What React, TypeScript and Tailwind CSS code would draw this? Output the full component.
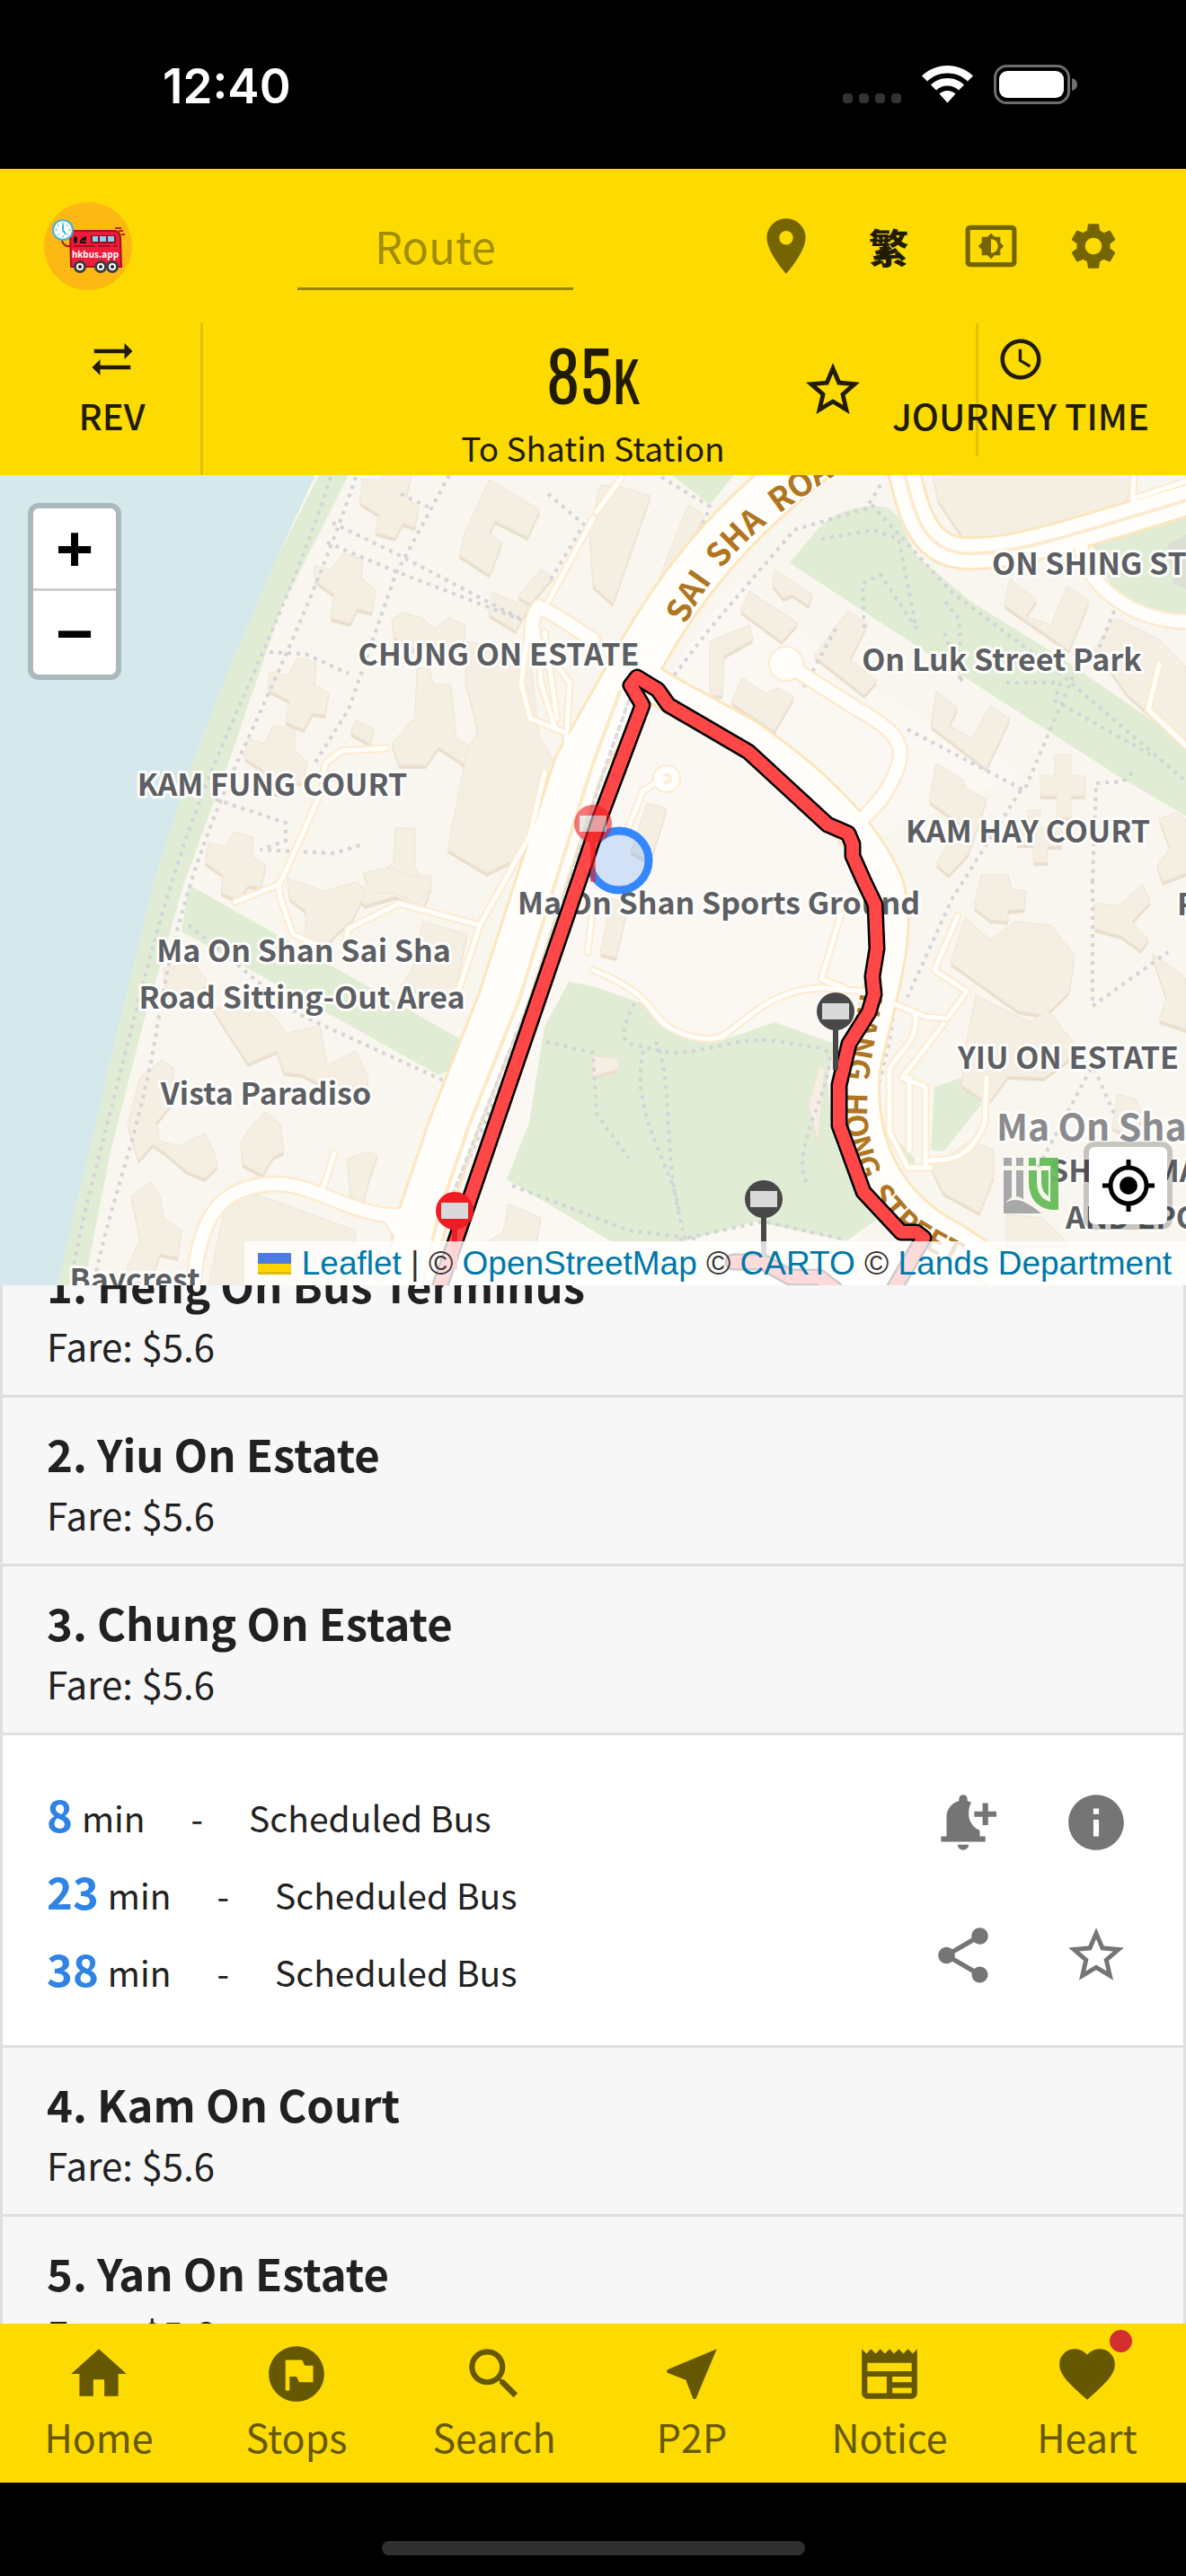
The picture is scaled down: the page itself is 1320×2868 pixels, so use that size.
import React from "react";
import {
  MdHome,
  MdFlagCircle,
  MdSearch,
  MdNearMe,
  MdNewspaper,
  MdFavorite,
  MdInfo,
  MdShare,
  MdStarBorder,
  MdSyncAlt,
  MdSchedule,
  MdLocationOn,
  MdSettings,
  MdSettingsBrightness,
} from "react-icons/md";

const buildings: string[] = [
  // towers along the waterfront
  "M402 533l18 2 8-6h30l-6 24 14 12-4 22-14-4-8 16-22-6 4-20-22-14 4-20z",
  "M350 630l18 4 14-18 22 6-2 22 16 12-4 26-16-4-8 16-22-6 4-26-22-16z",
  "M300 748l20 4 12-20 20 6-2 24 16 10-4 24-14-2-10 18-20-8 4-24-24-12z",
  "M276 822l18 6 10-20 24 4 0 24 14 12-6 24-16-4-8 16-20-4 2-22-22-14z",
  "M232 938l20 4 8-16 22 6-2 22 16 10-6 24-14-2-10 16-20-8 2-20-20-14z",
  "M436 690l12-8 22 6 14 12 16-12 18 8-2 22-14 8-26-6-20 4-18-16z",
  "M545 534l56 34-14 30-36-18-6 14 14 10-14 36-34-22 6-24z",
  "M602 634l14 8-26 30-14-8z",
  "M548 660l40 16-14 26-30-18z",
  "M464 744h14l4 18h20l6 60 24 14-6 24-16-14-22-14-14 20-30 0-8-24 26-30z",
  "M396 802l20 10-4 16-22-12z",
  "M520 714l70 16 10 90 18 30-14 24-10 60-16 20-36 18-44-26 22-110 12-22-14-56z",
  "M440 922h22v44l16 30-8 16-30-14-34 10-12-14 24-18 20-16z",
  "M320 978l40 14 36-10 12 10-16 32-16 14-12 12-24-2 0-34-18-14z",
  "M404 972l30-6 28 10 18-2 0 16-16 16-26-12-24 0z",
  "M470 1026l50 14-14 64-16 6-44-12 14-22z",
  "M182 1078l34-6 14 20-10 20-36-10z",
  "M236 1122l60 0 24 28 36-8 8 44 32-16 14 30-4 30-28-12-42-22-20-2-8-24-32 14z",
  "M156 1200l24-20 14 10-4 40-16 20 4 20 20 6 30-14 10 20 4 16-14 14-20-8-26-22-12-8-16 18-12-40z",
  "M276 1258l20-20 16 14 4 30-12 6-12 20-22-12-2-24z",
  "M386 1290l24-8 10 4-10 30-6 26-14-12z",
  "M146 1332l22-16 10 16 4 24 20 14-4 30-20-4-10 30-30 4 4-20 14-30z",
  "M250 1346l36-16 110 40-10 61h-154z",
  "M566 1340l36 16-6 34-50 26-10-30 24-14z",
  // north and east blocks
  "M668 540l24 2 32 10-42 120-22-20-4-60z",
  "M766 562l18 12-60 126-10 34-14-6 24-60z",
  "M834 658l54 36-18 20-46-34z",
  "M862 634l42 28-4 12-18-12-10 4-12-14z",
  "M790 714l44-18 4 16-32 18-2 44-14 0z",
  "M944 680l22 14-20 40 30 24-14 16-56-44z",
  "M826 754l26 18 14-6 18 10-22 38-48-32z",
  "M1038 529h224l-16 54-108 34-60-10-34-50z",
  "M1124 644l30 24-12 18 28 10 18-44 24 18-22 54-72-50z",
  "M1042 770l24 18-10 20 26 14 20-36 22 14-26 56-62-48z",
  "M1042 850l30 18 4 10 22 12-20 60-22 24-14-12 26-46-34-24z",
  "M1174 840h18v24h16v22h-16v24h-16v-24h-18v-22h16z",
  "M1144 902h14v20h24v20h-16v18h-16v-20h-18v-18h12z",
  "M1242 688l48 24 30 30v90l-66-60-36-50z",
  "M1290 912l20-8 10 8v60l-26 10-6-18 14-20z",
  "M720 894l22 6-18 60-22-12z",
  "M680 1000l20 6-14 60-18-4z",
  "M1092 974l30 0 4 16 16 2-2 20-18 2 0 12-20-2-18-14z",
  "M1074 1022l28 24 28-20 40 4 26 34-6 40-26 26-30-4-76-54z",
  "M1086 1108l60 30 20-14 36 46-40 30-40-2-22 30-30-20 4-40z",
  "M1218 1006l28 2 26-24 8 20-20 22 18 20-8 12-22-16-30-8z",
  "M1282 1062l24 16 14 12v56l-30-10 8-24z",
  "M1244 1218l20 6 10 20-16 20-20-8z",
  "M1080 1270l26 10 0 30-16 40-40-22-14-28z",
  "M1120 1352l40 4 30 30h-70z",
  "M660 1176l28 2 0 12-28 8z",
  "M912 1186l6 4-8 80-10-40z",
];

const footpaths: string[] = [
  "M368 531C330 650 276 760 236 857S170 1050 140 1170 92 1350 78 1431",
  "M396 531C356 650 300 770 268 840S196 1010 176 1137 124 1330 104 1431",
  "M370 582L448 620 600 700",
  "M364 604L440 636 580 690",
  "M500 529L440 640 388 790 350 850",
  "M446 550L478 565",
  "M610 550L650 584 610 650",
  "M300 726L340 728 388 750",
  "M240 890L318 916 318 936 290 946 372 950 404 940",
  "M210 1030L330 1128 500 1206 486 1300 460 1340",
  "M640 1000L590 1080 570 1180 500 1340",
  "M570 1320L700 1370 780 1380",
  "M608 1160L660 1172 664 1240 700 1290",
  "M706 1117C680 1170 700 1160 736 1170S820 1150 870 1160 930 1160 920 1200 880 1290 900 1320",
  "M716 1170C700 1240 750 1300 756 1350",
  "M730 1160C750 1200 736 1280 760 1370",
  "M756 1380L850 1360 940 1380",
  "M736 531L790 564 770 620 712 700",
  "M980 540L964 566 884 590 790 700 744 760",
  "M914 600L972 590 1000 600 1020 700 980 640 960 650 962 700",
  "M1052 670L1068 690 1070 760 1050 700",
  "M970 562L1060 660 1180 750 1320 870",
  "M930 700L892 770",
  "M1010 812L1140 880 1200 740",
  "M1136 880L1060 1000 1010 1110",
  "M1120 760L1180 760 1174 780 1280 840",
  "M1216 980L1216 1120 1300 1060",
  "M994 990L1010 1010 990 1160 970 1240 1000 1350 1080 1400",
  "M1214 1190L1150 1310",
  "M1218 1190L1240 1240",
  "M1240 680L1216 740",
  "M1260 860L1250 870 1220 872 1216 980",
];

const minorRoads: string[] = [
  "M430 833L380 836 362 850 358 880 336 930 318 970 310 985 312 1000 326 1040 360 1056",
  "M310 985L262 1004",
  "M384 1050L388 1034 444 1006 534 1030 590 930 606 860",
  "M534 1030L510 1104",
  "M660 577L610 670",
  "M692 531L664 570",
  "M604 720L634 760 630 830 606 1000",
  "M588 700L580 760 590 800 628 815",
  "M598 700L602 760 618 812",
  "M606 704L620 800",
  "M372 1284L358 1328",
  "M740 866L716 880 700 920",
  "M660 1010L654 1060",
  "M660 1080C700 1096 716 1110 730 1130S780 1160 800 1155 850 1100 917 1100L975 1105",
  "M936 1018L914 1090 940 1100",
  "M1066 1020L1040 1080 1076 1104 1054 1134 1030 1132 996 1118",
  "M1018 1128C1024 1160 1000 1170 990 1190V1260L1010 1300H1036",
  "M1050 1140L1004 1200 1030 1210 1030 1300",
  "M1012 1200V1280",
  "M1098 1200L1096 1250C1080 1290 1060 1292 1030 1292",
  "M1290 740L1278 790 1320 830",
  "M1262 530L1260 568",
  "M1262 555L1320 536",
];

const collectorRoads: string[] = [
  "M875 739L955 790C1000 815 1010 830 996 862S970 900 955 917",
  "M1203 606C1206 650 1260 692 1320 692",
  "M215 1431C222 1360 240 1318 311 1318 350 1320 390 1350 433 1353 450 1356 462 1346 470 1336",
  "M600 676C590 690 592 700 592 710M600 676L616 684 660 712",
  "M433 1353L456 1390",
];

const saiShaRoad =
  "M905 510C830 570 770 630 715 727L668 810 644 853 606 970 560 1113 505 1253 471 1353 450 1440";
const hangHongStreet =
  "M700 745L744 772 828 818C890 860 960 920 986 985 1004 1040 974 1120 960 1190 952 1290 1000 1350 1060 1380L1150 1440";
const onShingStreet =
  "M1000 500C1016 560 1020 620 1085 616 1130 616 1180 600 1330 554";

const busRoute =
  "M490 1431L648 970 668 910 715 785 702 763 709 754 732 768 744 785 833 837 921 918 944 928 949 940V953L961 980 974 1007 976 1056 971 1087 973 1107 967 1127 945 1162 934 1208V1253L961 1327 1003 1372H1020L1028 1378 992 1440";
const busRouteStart = "M816 1405H849L879 1422H912L929 1435";

const mapLabels: { x: number; y: number; text: string; anchor: "start" | "middle" }[] = [
  { x: 555, y: 741, text: "CHUNG ON ESTATE", anchor: "middle" },
  { x: 303, y: 886, text: "KAM FUNG COURT", anchor: "middle" },
  { x: 1104, y: 640, text: "ON SHING STREET", anchor: "start" },
  { x: 1115, y: 747, text: "On Luk Street Park", anchor: "middle" },
  { x: 1144, y: 938, text: "KAM HAY COURT", anchor: "middle" },
  { x: 800, y: 1018, text: "Ma On Shan Sports Ground", anchor: "middle" },
  { x: 338, y: 1071, text: "Ma On Shan Sai Sha", anchor: "middle" },
  { x: 336, y: 1123, text: "Road Sitting-Out Area", anchor: "middle" },
  { x: 296, y: 1230, text: "Vista Paradiso", anchor: "middle" },
  { x: 150, y: 1437, text: "Baycrest", anchor: "middle" },
  { x: 1189, y: 1190, text: "YIU ON ESTATE", anchor: "middle" },
  { x: 1310, y: 1019, text: "P", anchor: "start" },
  { x: 1168, y: 1316, text: "SHING MAN", anchor: "start" },
  { x: 1186, y: 1368, text: "AND EPOCH", anchor: "start" },
];

function StopPin({ x, y, color, faded }: { x: number; y: number; color: string; faded?: boolean }) {
  return (
    <g transform={`translate(${x} ${y})`} opacity={faded ? 0.6 : 1}>
      <rect x="-3" y="18" width="6" height="47" fill={color} />
      <circle r="21" fill={color} />
      <rect x="-15" y="-9" width="30" height="18" fill="#d9d9d9" />
    </g>
  );
}

function RouteMap() {
  return (
    <svg
      className="absolute inset-0 h-full w-full"
      viewBox="0 529 1320 902"
      preserveAspectRatio="xMidYMid slice"
      role="img"
      aria-label="Route map"
    >
      <rect y="500" width="1320" height="960" fill="#f9f6ef" />
      <path d="M700 760L660 900 570 1200 500 1431H950L990 1200 980 960 860 820z" fill="#fbf8f3" />
      <path d="M820 640L960 760 1140 860 980 930 740 760z" fill="#fbf8f3" />
      <path
        d="M0 500H364L309 620 252 753 212 857 172 980 126 1170 90 1323 62 1440H0z"
        fill="#d5e8eb"
      />
      <g fill="#e0ecd4">
        <path d="M355 529H388L313 677 261 830 206 980 160 1137 122 1287 92 1440H62L90 1323 126 1170 172 980 212 857 252 753 309 620z" />
        <path d="M971 563C940 566 920 575 905 595L879 627 1072 753 1249 867 1330 914V835L1182 733 1081 670 1018 617 1000 575 988 565z" />
        <path d="M1216 607L1330 572V690C1290 690 1250 670 1236 650z" />
        <path d="M736 520L790 562 824 520z" />
        <path d="M210 985L307 1040 518 1160 505 1190 488 1197 202 1037z" />
        <path d="M633 1093L660 1098 715 1117 757 1150 799 1160 862 1138 929 1162 921 1203 929 1270 950 1323 976 1357 942 1382 887 1370 841 1360 761 1382H680L564 1313 589 1250 606 1143z" />
        <path d="M1040 1210L1070 1200 1090 1180 1092 1230 1050 1282 1036 1280z" />
        <path d="M996 1266L1018 1290V1302L1004 1294z" />
      </g>
      <path d="M1300 606L1330 590V660L1306 650z" fill="#dcdfd6" />

      <g fill="#eadfce" transform="translate(0 4)">
        {buildings.map((d) => (
          <path key={d} d={d} />
        ))}
      </g>
      <g fill="#f5eee3" stroke="#efe5d6" strokeWidth="1">
        {buildings.map((d) => (
          <path key={d} d={d} />
        ))}
      </g>

      <g fill="none" stroke="#d3d3d8" strokeWidth="4" strokeDasharray="4 6">
        {footpaths.map((d) => (
          <path key={d} d={d} />
        ))}
      </g>

      <g fill="none" strokeLinejoin="round" strokeLinecap="round">
        <g stroke="#fdebd0">
          {minorRoads.map((d) => (
            <path key={d} d={d} strokeWidth="9" />
          ))}
          {collectorRoads.map((d) => (
            <path key={d} d={d} strokeWidth="19" />
          ))}
          <circle cx="875" cy="739" r="12" strokeWidth="16" />
          <circle cx="742" cy="867" r="10" strokeWidth="12" />
        </g>
        <path d={saiShaRoad} stroke="#fce6bd" strokeWidth="58" />
        <path d={hangHongStreet} stroke="#fce6bd" strokeWidth="42" />
        <path d={onShingStreet} stroke="#fce6bd" strokeWidth="38" />
        <g stroke="#fffefb">
          {minorRoads.map((d) => (
            <path key={d} d={d} strokeWidth="5" />
          ))}
          {collectorRoads.map((d) => (
            <path key={d} d={d} strokeWidth="14" />
          ))}
          <circle cx="875" cy="739" r="12" strokeWidth="12" />
          <circle cx="742" cy="867" r="10" strokeWidth="8" />
        </g>
        <path d={saiShaRoad} stroke="#fffefb" strokeWidth="52" />
        <path d={hangHongStreet} stroke="#fffefb" strokeWidth="36" />
        <path d={onShingStreet} stroke="#fffefb" strokeWidth="32" />
        <path d={onShingStreet} stroke="#fdebd0" strokeWidth="4" />
        <path d="M690 770L660 850 622 970 578 1113 522 1253 488 1353 470 1431" stroke="#fce9c6" strokeWidth="4" />
        <path d="M700 780L668 870 634 980 590 1113 534 1253 500 1340" stroke="#dcdcdf" strokeWidth="4" strokeDasharray="4 6" />
      </g>

      <g
        fill="#5d5f62"
        stroke="#fdfdfc"
        strokeWidth="6"
        strokeLinejoin="round"
        paintOrder="stroke"
        className="font-['Noto_Sans_CJK_TC','Noto_Sans',sans-serif] text-[34px] font-bold"
      >
        {mapLabels.map((l) => (
          <text key={l.text} x={l.x} y={l.y} textAnchor={l.anchor}>
            {l.text}
          </text>
        ))}
        <text x="1109" y="1270" fill="#8b8b8d" className="text-[41px]">
          Ma On Shan
        </text>
      </g>

      <defs>
        <path id="sai-sha-label" d="M763 696C790 640 830 600 870 570 900 548 940 522 990 490" />
        <path id="hang-hong-label" d="M958 1105C950 1150 938 1200 940 1245 944 1300 970 1345 1010 1378 1040 1398 1080 1415 1120 1440" />
      </defs>
      <g
        fill="#b0761f"
        stroke="#fffefb"
        strokeWidth="4"
        paintOrder="stroke"
        className="font-['Noto_Sans_CJK_TC','Noto_Sans',sans-serif] font-bold"
      >
        <text className="text-[36px]">
          <textPath href="#sai-sha-label">{"SAI\u00a0\u00a0SHA\u00a0\u00a0ROAD"}</textPath>
        </text>
        <text className="text-[34px]">
          <textPath href="#hang-hong-label">{"HANG\u00a0\u00a0HONG\u00a0\u00a0STREET"}</textPath>
        </text>
      </g>

      <circle cx="689" cy="958" r="33" fill="#3388ff" fillOpacity="0.2" stroke="#3388ff" strokeWidth="9" />
      <g fill="none" strokeLinejoin="round" strokeLinecap="round">
        <path d={busRoute} stroke="#000" strokeWidth="19" />
        <path d={busRouteStart} stroke="#000" strokeWidth="19" />
        <path d={busRoute} stroke="#ff4747" strokeWidth="14" />
        <path d={busRouteStart} stroke="#ff4747" strokeWidth="14" />
      </g>
      <StopPin x={660} y={917} color="#ee1c24" faded />
      <StopPin x={930} y={1126} color="#484848" />
      <StopPin x={850} y={1335} color="#484848" />
      <StopPin x={506} y={1348} color="#ee1c24" />

      <g opacity="0.95">
        <g fill="#a3a4a7">
          <path d="M1117 1289h9v9h-9zM1131 1289h8v9h-8zM1117 1303h9v30q-6 4-9 9zM1131 1303h8v32q-4-3-8-3z" />
          <path d="M1117 1341q8-7 20-4 10 4 22 14h-42z" />
        </g>
        <g fill="#66bd5b">
          <path d="M1145 1289h8v9h-8zM1157 1289h21v58h-8q-25-4-25-32v-12h9v12q0 19 15 23v-40h-12z" />
          <path d="M1159 1303h8v29q-8-5-8-16z" />
        </g>
      </g>
    </svg>
  );
}

function AppLogo() {
  return (
    <svg viewBox="49 225 98 98" className="h-[98px] w-[98px]" role="img" aria-label="hkbus.app">
      <circle cx="98" cy="274" r="49" fill="#fdb813" />
      <path d="M69 268q2 7 9 6" fill="none" stroke="#a81919" strokeWidth="2" />
      <path d="M128 254h7M132 257h5M135 261h4" stroke="#b3261e" strokeWidth="2" />
      <path d="M78 258q0-1 2-1h48q6 1 6 8l1 32H79z" fill="#ee1c3a" stroke="#a80f22" strokeWidth="2" />
      <path d="M82 274h24M109 274h14M126 274h5" stroke="#a80f22" strokeWidth="2" />
      <rect x="101" y="262" width="28" height="9" fill="#8c0f1f" />
      <path d="M103 263h6v6h-6zM111 263h7v6h-7zM120 263h7v6h-7z" fill="#8fd0f2" />
      <ellipse cx="84" cy="267" rx="2" ry="4" fill="#111" />
      <path d="M96 264l-4 2q-3 3-2 4h6M91 267h5" stroke="#111" strokeWidth="2" fill="none" />
      <text
        x="106"
        y="287"
        textAnchor="middle"
        fill="#fff"
        className="font-['Noto_Sans_CJK_TC',sans-serif] text-[10px] font-bold"
      >
        hkbus.app
      </text>
      {[89, 112, 125].map((x) => (
        <g key={x}>
          <circle cx={x} cy="297" r="7" fill="#3c3c46" />
          <circle cx={x} cy="297" r="4" fill="#fff" />
          <circle cx={x} cy="297" r="2" fill="#222" />
        </g>
      ))}
      <circle cx="70" cy="256" r="12" fill="#3fb3dd" />
      <circle cx="70" cy="256" r="10" fill="#fff" />
      <path
        d="M70 247v3M70 262v3M61 256h3M76 256h3M64 250l2 2M74 260l2 2M64 262l2-2M74 252l2-2"
        stroke="#3fb3dd"
        strokeWidth="1"
      />
      <path d="M70 250v6l3 5" fill="none" stroke="#3fb3dd" strokeWidth="2" />
    </svg>
  );
}

function NotificationAddIcon() {
  return (
    <svg viewBox="0 0 24 24" fill="currentColor" className="h-[74px] w-[74px]" aria-hidden="true">
      <path d="M4 17h2v-7c0-2.79 1.91-5.14 4.5-5.8v-.7a1.5 1.5 0 013 0v.7c.5.13.98.32 1.42.56C14.3 5.8 14 7.3 14 9c0 2.6 1.6 4.9 4 5.9V17h2v2H4zM10 20h4a2 2 0 01-4 0zM19 5h2v3h3v2h-3v3h-2v-3h-3V8h3z" />
    </svg>
  );
}

function StatusBar() {
  return (
    <div className="flex h-[188px] shrink-0 items-center justify-between bg-black pr-[121px] pl-[181px] text-white">
      <time className="pt-[4px] font-['Inter',sans-serif] text-[53px] leading-[64px] font-semibold">12:40</time>
      <div className="flex items-center gap-[23px]">
        <div className="flex gap-[7px] pt-[30px]">
          {[0, 1, 2, 3].map((i) => (
            <span key={i} className="h-[11px] w-[11px] rounded-[4px] bg-[#333]" />
          ))}
        </div>
        <svg viewBox="0 0 57 42" className="h-[42px] w-[57px]" fill="#fff" aria-label="Wi-Fi">
          <path d="M28.500 0C39 0 49 4 57 11.500L51 17.500C45 11.700 37 8.500 28.500 8.500S12 11.700 6 17.500L0 11.500C8 4 18 0 28.500 0z" />
          <path d="M28.500 14C35.500 14 42 16.700 47 21.500L41 27.500C37.500 24.300 33.200 22.500 28.500 22.500S19.500 24.300 16 27.500L10 21.500C15 16.700 21.500 14 28.500 14z" />
          <path d="M28.500 28C32 28 35 29.300 37.500 31.500L28.500 41.500 19.500 31.500C22 29.300 25 28 28.500 28z" />
        </svg>
        <svg viewBox="0 0 93 44" className="h-[44px] w-[93px]" aria-label="Battery full">
          <rect x="1.500" y="1.500" width="82" height="41" rx="13" fill="none" stroke="#6e6e6e" strokeWidth="3" />
          <rect x="6" y="7" width="72" height="30" rx="9" fill="#fff" />
          <path d="M87 15c4 1 6 4 6 7s-2 6-6 7z" fill="#6e6e6e" />
        </svg>
      </div>
    </div>
  );
}

function Header() {
  const iconButton = "flex h-[120px] w-[114px] items-center justify-center text-[#756500]";
  const tabButton = "flex h-[148px] flex-col items-center pt-[13px] text-[40px] font-medium whitespace-nowrap";
  return (
    <header className="shrink-0 bg-[#fedb00] text-[#211c00]">
      <div className="flex h-[172px] items-center pr-[46px] pl-[49px]">
        <a href="#home" aria-label="Home">
          <AppLogo />
        </a>
        <input
          type="text"
          aria-label="Route"
          placeholder="Route"
          className="ml-[184px] h-[98px] w-[307px] border-b-3 border-[#978300] bg-transparent text-center text-[49px] outline-none placeholder:text-[#a18c00]"
        />
        <div className="ml-auto flex">
          <button type="button" aria-label="Location" className={iconButton}>
            <MdLocationOn size={74} />
          </button>
          <button type="button" className="h-[120px] w-[114px] text-[44px] font-black">
            繁
          </button>
          <button type="button" aria-label="Theme" className={iconButton}>
            <MdSettingsBrightness size={62} />
          </button>
          <button type="button" aria-label="Settings" className={iconButton}>
            <MdSettings size={62} />
          </button>
        </div>
      </div>
      <div className="grid h-[169px] grid-cols-[226px_1fr_234px]">
        <div className="border-r-3 border-[#e0c100] pl-[26px]">
          <button type="button" className={`${tabButton} w-full`}>
            <MdSyncAlt size={54} />
            <span className="pt-[2px] leading-[66px]">REV</span>
          </button>
        </div>
        <div className="relative pl-[8px] text-center">
          <h1 className="h-[112px] pt-[14px] font-['Oswald','Roboto_Condensed','Liberation_Sans_Narrow','Noto_Sans_CJK_TC',sans-serif] text-[76px] leading-[84px] font-normal">
            85<span className="text-[61px]">K</span>
          </h1>
          <p className="text-[37px] leading-[52px]">To Shatin Station</p>
          <button type="button" aria-label="Add to favourites" className="absolute top-[38px] right-[123px]">
            <MdStarBorder size={72} />
          </button>
        </div>
        <div className="h-[148px] border-l-3 border-[#e0c100]">
          <button type="button" className={`${tabButton} -ml-[103px] w-[300px]`}>
            <MdSchedule size={54} />
            <span className="pt-[2px] leading-[66px]">JOURNEY TIME</span>
          </button>
        </div>
      </div>
    </header>
  );
}

function MapPanel() {
  const link = "text-[#0078a8]";
  return (
    <section className="relative min-h-0 flex-[902] overflow-hidden">
      <RouteMap />
      <div className="absolute top-[31px] left-[31px] flex w-[104px] flex-col overflow-hidden rounded-[12px] border-6 border-black/20 bg-white bg-clip-padding font-['Liberation_Sans',sans-serif] text-[72px] font-bold text-black">
        <button type="button" aria-label="Zoom in" className="h-[92px] border-b-3 border-[#ccc] leading-[88px]">
          +
        </button>
        <button type="button" aria-label="Zoom out" className="h-[93px] leading-[88px]">
          −
        </button>
      </div>
      <button
        type="button"
        aria-label="Show my location"
        className="absolute right-[15px] bottom-[62px] flex h-[98px] w-[99px] items-center justify-center rounded-[12px] border-6 border-black/20 bg-white bg-clip-padding"
      >
        <svg viewBox="0 0 58 58" className="h-[58px] w-[58px]" fill="none" stroke="#000" strokeWidth="5">
          <circle cx="29" cy="29" r="20" />
          <circle cx="29" cy="29" r="10" fill="#000" stroke="none" />
          <path d="M29 0v9M29 49v9M0 29h9M49 29h9" />
        </svg>
      </button>
      <div className="absolute right-0 bottom-0 flex h-[49px] items-center bg-white/80 pr-[16px] pl-[15px] font-['Liberation_Sans',sans-serif] text-[37px] whitespace-pre text-[#333]">
        <svg viewBox="0 0 37 24" className="mr-[12px] h-[24px] w-[37px]" aria-hidden="true">
          <rect width="37" height="12" fill="#4c7be1" />
          <rect y="12" width="37" height="12" fill="#ffd500" />
          <rect y="21" width="37" height="3" fill="#e0bc00" />
        </svg>
        <a href="#leaflet" className={link}>Leaflet</a>
        <span> | © </span>
        <a href="#osm" className={link}>OpenStreetMap</a>
        <span> © </span>
        <a href="#carto" className={link}>CARTO</a>
        <span> © </span>
        <a href="#lands" className={link}>Lands Department</a>
      </div>
    </section>
  );
}

function StopRow({ name }: { name: string }) {
  return (
    <li>
      <button type="button" className="block h-[188px] w-full border-b-3 border-[#dfdfdf] bg-[#f7f7f7] px-[49px] pt-[3px] text-left">
        <h2 className="text-[49px] leading-[72px] font-bold">{name}</h2>
        <p className="text-[42px] leading-[64px]">Fare: $5.6</p>
      </button>
    </li>
  );
}

function Arrivals() {
  const action = "flex h-[148px] w-[148px] items-center justify-center";
  return (
    <li className="flex h-[348px] items-center justify-between border-b-3 border-[#dfdfdf] bg-white pr-[23px] pl-[49px]">
      <ul>
        {[8, 23, 38].map((minutes) => (
          <li key={minutes} className="flex h-[86px] items-baseline text-[39px] leading-[86px]">
            <span className="text-[49px] font-bold text-[#2f83e4]">{minutes}</span>
            <span className="pl-[10px]">min</span>
            <span className="px-[51px]">-</span>
            <span>Scheduled Bus</span>
          </li>
        ))}
      </ul>
      <div className="grid grid-cols-2 pb-[4px] text-[#757575]">
        <button type="button" aria-label="Set reminder" className={action}>
          <NotificationAddIcon />
        </button>
        <button type="button" aria-label="Stop information" className={action}>
          <MdInfo size={74} />
        </button>
        <button type="button" aria-label="Share" className={action}>
          <MdShare size={74} />
        </button>
        <button type="button" aria-label="Save stop" className={action}>
          <MdStarBorder size={74} />
        </button>
      </div>
    </li>
  );
}

function StopList() {
  return (
    <main className="min-h-0 flex-[1156] overflow-hidden border-x-3 border-[#dfdfdf] bg-[#f7f7f7] text-[#212121]">
      <ol className="-mt-[63px]">
        <StopRow name="1. Heng On Bus Terminus" />
        <StopRow name="2. Yiu On Estate" />
        <StopRow name="3. Chung On Estate" />
        <Arrivals />
        <StopRow name="4. Kam On Court" />
        <StopRow name="5. Yan On Estate" />
      </ol>
    </main>
  );
}

const tabs = [
  { label: "Home", Icon: MdHome },
  { label: "Stops", Icon: MdFlagCircle },
  { label: "Search", Icon: MdSearch },
  { label: "P2P", Icon: MdNearMe },
  { label: "Notice", Icon: MdNewspaper },
  { label: "Heart", Icon: MdFavorite, badge: true },
];

function BottomNav() {
  return (
    <nav className="grid h-[177px] shrink-0 grid-cols-6 bg-[#fedb00] text-[#665800]">
      {tabs.map(({ label, Icon, badge }) => (
        <a key={label} href={`#${label.toLowerCase()}`} className="flex flex-col items-center pt-[19px]">
          <span className="relative">
            <Icon size={74} />
            {badge && <span className="absolute -top-[12px] -right-[13px] h-[25px] w-[25px] rounded-full bg-[#d32f2f]" />}
          </span>
          <span className="text-[43px] leading-[64px]">{label}</span>
        </a>
      ))}
    </nav>
  );
}

export default function App() {
  return (
    <div className="flex h-screen w-full flex-col overflow-hidden bg-black font-['Noto_Sans_CJK_TC','Noto_Sans',sans-serif]">
      <StatusBar />
      <Header />
      <MapPanel />
      <StopList />
      <BottomNav />
      <div className="flex h-[104px] shrink-0 items-end justify-center bg-black pb-[23px]">
        <div className="h-[16px] w-[471px] rounded-full bg-[#303030]" />
      </div>
    </div>
  );
}
